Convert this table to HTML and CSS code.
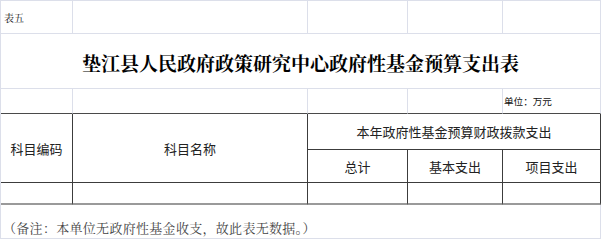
FILE: index.html
```html
<!DOCTYPE html>
<html lang="zh-CN">
<head>
<meta charset="utf-8">
<title>政府性基金预算支出表</title>
<link rel="stylesheet" href="styles.css">
</head>
<body>
<table class="sheet">
  <colgroup>
    <col class="c1"><col class="c2"><col class="c3"><col class="c4"><col class="c5">
  </colgroup>
  <tr class="r-top">
    <td class="tag">表五</td><td></td><td></td><td></td><td></td>
  </tr>
  <tr class="r-title">
    <td colspan="5" class="title">垫江县人民政府政策研究中心政府性基金预算支出表</td>
  </tr>
  <tr class="r-unit">
    <td class="dark-b"></td><td class="dark-b"></td><td class="dark-b"></td><td class="dark-b"></td><td class="dark-b unit">单位：万元</td>
  </tr>
  <tr class="r-h1">
    <td rowspan="2" class="hd dk">科目编码</td>
    <td rowspan="2" class="hd dk">科目名称</td>
    <td colspan="3" class="hd dk">本年政府性基金预算财政拨款支出</td>
  </tr>
  <tr class="r-h2">
    <td class="hd dk">总计</td>
    <td class="hd dk">基本支出</td>
    <td class="hd dk">项目支出</td>
  </tr>
  <tr class="r-data">
    <td class="dk end"></td><td class="dk end"></td><td class="dk end"></td><td class="dk end"></td><td class="dk end"></td>
  </tr>
  <tr class="r-note">
    <td colspan="5" class="note">（备注：本单位无政府性基金收支，故此表无数据。）</td>
  </tr>
</table>
</body>
</html>
```
FILE: styles.css
```css
* { box-sizing: border-box; }
html, body { margin: 0; padding: 0; background: #ffffff; }
body {
  font-family: "Noto Sans CJK SC", "Liberation Sans", sans-serif;
  color: #222;
}
.sheet {
  border-collapse: separate;
  border-spacing: 0;
  table-layout: fixed;
  width: 601px;
  border-top: 1px solid #dcdfea;
  border-left: 1px solid #dcdfea;
}
.c1 { width: 72px; }
.c2 { width: 235px; }
.c3 { width: 100px; }
.c4 { width: 95px; }
.c5 { width: 98px; }
.sheet td {
  padding: 0;
  border-right: 1px solid #dcdfea;
  border-bottom: 1px solid #dcdfea;
  vertical-align: middle;
  white-space: nowrap;
  overflow: visible;
}
.r-top { height: 33px; }
.r-title { height: 55px; }
.r-unit { height: 25px; }
.r-h1 { height: 36px; }
.r-h2 { height: 33px; }
.r-data { height: 22px; }
.r-note { height: 34px; }

.tag {
  font-family: "Noto Serif CJK SC", "Noto Sans CJK SC", serif;
  font-size: 10px;
  padding-left: 3px !important;
  color: #111;
}
.title {
  text-align: center;
  font-family: "Noto Serif CJK SC", "Noto Sans CJK SC", serif;
  font-weight: bold;
  font-size: 19px;
  color: #000;
  padding-top: 2px !important;
}
.sheet td.dark-b { border-bottom: 1px solid #4a4a4a; }
.unit {
  font-size: 9.6px;
  padding-left: 1px !important;
  color: #111;
}
.sheet td.dk {
  border-right: 1px solid #3c3c3c;
  border-bottom: 1px solid #3c3c3c;
}
.hd {
  text-align: center;
  font-size: 13px;
  color: #222;
}
.sheet td.end { border-bottom: 2px solid #9a9a9a; }
.note {
  font-family: "Noto Serif CJK SC", "Noto Sans CJK SC", serif;
  font-size: 13px;
  letter-spacing: 0.3px;
  color: #444;
  padding-left: 2px !important;
  padding-top: 12px !important;
}
```
